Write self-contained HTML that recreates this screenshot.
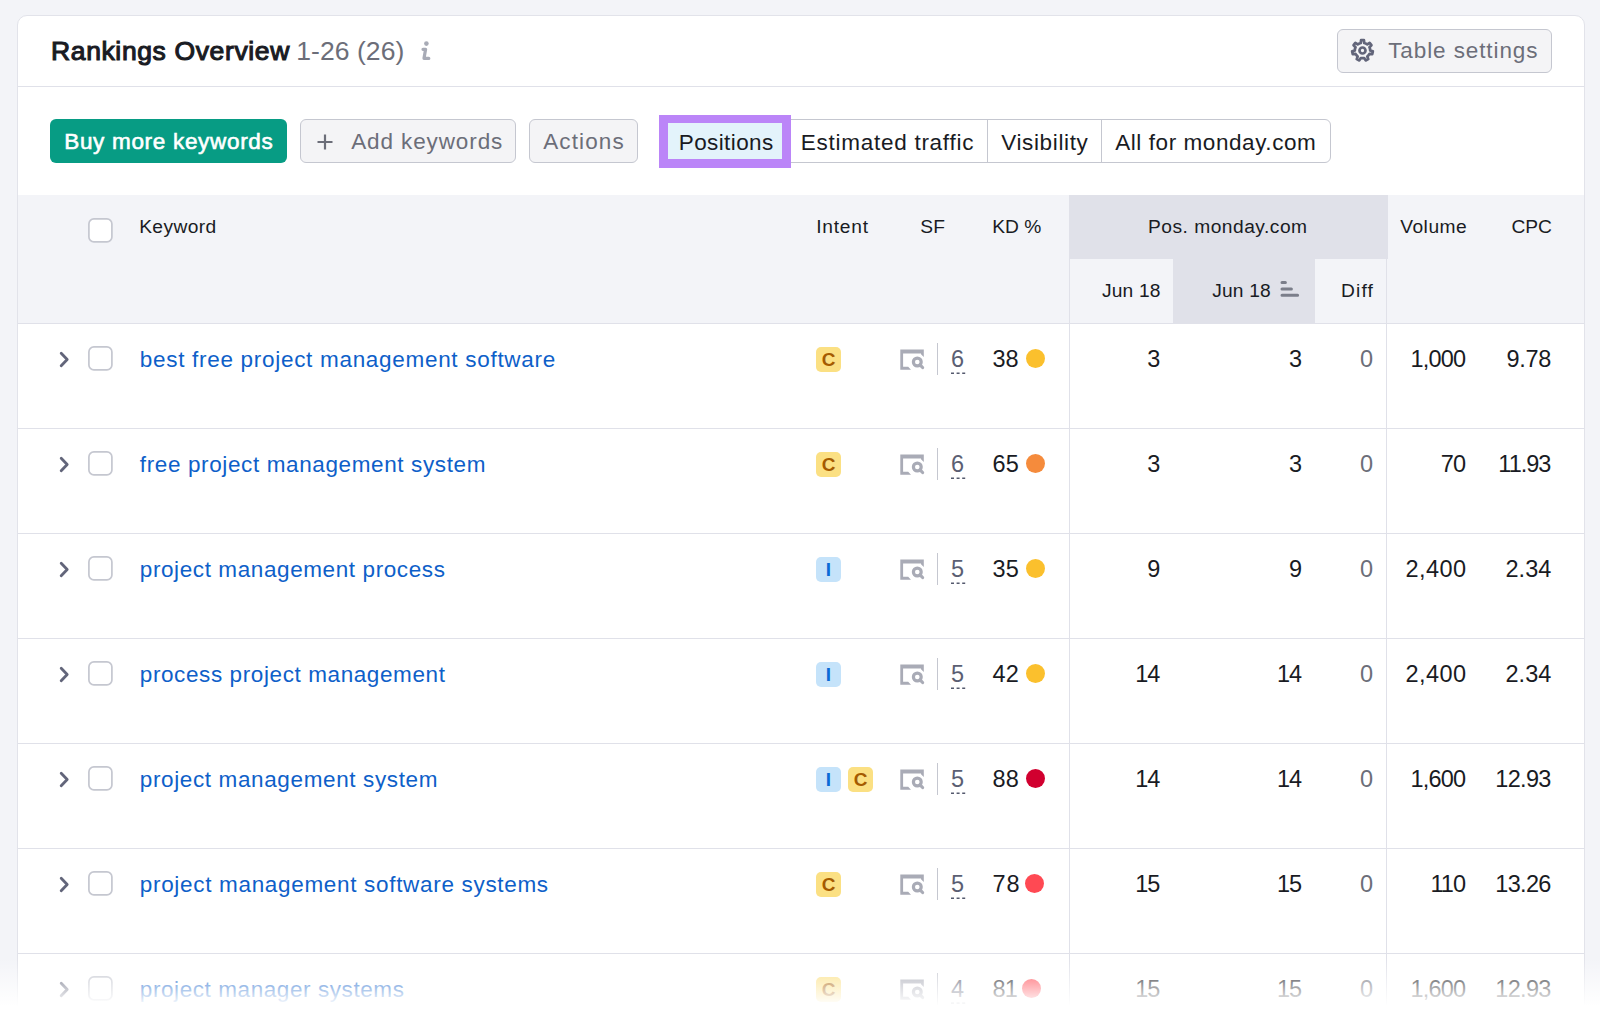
<!DOCTYPE html>
<html><head><meta charset="utf-8"><style>
html,body{margin:0;padding:0;}
body{width:1600px;height:1014px;overflow:hidden;background:#f3f4f8;position:relative;font-family:"Liberation Sans",sans-serif;}
.t{position:absolute;white-space:nowrap;}
.badge{position:absolute;width:25px;height:25px;border-radius:5px;font-weight:700;font-size:19px;line-height:26px;text-align:center;}
</style></head><body>
<div style="position:absolute;left:17px;top:15px;width:1568px;height:1200px;background:#fff;border:1px solid #e2e3ea;border-radius:10px;box-sizing:border-box;"></div>
<div style="position:absolute;left:18px;top:86px;width:1566px;height:1px;background:#e0e1e9;"></div>
<div class="t" style="left:51.00px;top:33.80px;font-size:26.5px;line-height:34px;color:#191b23;letter-spacing:0.625px;-webkit-text-stroke:1.1px #191b23;">Rankings Overview</div>
<div class="t" style="left:296.20px;top:33.80px;font-size:26.5px;line-height:34px;color:#6c6e79;letter-spacing:0.069px;">1-26 (26)</div>
<svg style="position:absolute;left:418px;top:40px" width="14" height="22" viewBox="0 0 14 22"><circle cx="8.4" cy="3.6" r="2.3" fill="#a8abb6"/><path d="M5 9.3 H7.6 L6 18.4 H10.8" fill="none" stroke="#a8abb6" stroke-width="3.2" stroke-linejoin="round" stroke-linecap="round"/></svg>
<div style="position:absolute;left:1337px;top:29px;width:215px;height:44px;background:#f4f4f6;border:1px solid #c5c7d0;border-radius:6px;box-sizing:border-box;"></div>
<svg style="position:absolute;left:1350px;top:38px" width="25" height="25" viewBox="0 0 25 25"><path fill="none" stroke="#62657a" stroke-width="2.7" stroke-linejoin="round" d="M14.23 5.00 L13.95 2.20 L11.05 2.20 L10.77 5.00 L9.16 5.56 L7.71 6.47 L5.35 4.95 L3.55 7.21 L5.55 9.18 L4.99 10.78 L4.80 12.48 L2.14 13.38 L2.78 16.20 L5.57 15.86 L6.48 17.30 L7.68 18.51 L6.73 21.15 L9.34 22.41 L10.81 20.01 L12.50 20.20 L14.19 20.01 L15.66 22.41 L18.27 21.15 L17.32 18.51 L18.52 17.30 L19.430 15.86 L22.22 16.20 L22.86 13.38 L20.20 12.48 L20.01 10.79 L19.45 9.18 L21.45 7.21 L19.65 4.95 L17.29 6.47 L15.84 5.56Z"/><circle cx="12.5" cy="12.5" r="3" fill="none" stroke="#62657a" stroke-width="2.7"/></svg>
<div class="t" style="left:1388.20px;top:36.19px;font-size:22.5px;line-height:29px;color:#6c6e79;letter-spacing:0.900px;">Table settings</div>
<div style="position:absolute;left:50px;top:119px;width:237px;height:44px;background:#079c84;border-radius:6px;"></div>
<div class="t" style="left:64.20px;top:126.69px;font-size:22.5px;line-height:29px;color:#fff;letter-spacing:0.691px;-webkit-text-stroke:0.6px #fff;">Buy more keywords</div>
<div style="position:absolute;left:300px;top:119px;width:216px;height:44px;background:#f4f4f6;border:1px solid #c5c7d0;border-radius:6px;box-sizing:border-box;"></div>
<svg style="position:absolute;left:316px;top:133px" width="18" height="18" viewBox="0 0 18 18"><path d="M9 1.5V16.5M1.5 9H16.5" stroke="#6c6e79" stroke-width="2.2"/></svg>
<div class="t" style="left:351.20px;top:126.69px;font-size:22.5px;line-height:29px;color:#6c6e79;letter-spacing:0.891px;">Add keywords</div>
<div style="position:absolute;left:529px;top:119px;width:109px;height:44px;background:#f4f4f6;border:1px solid #c5c7d0;border-radius:6px;box-sizing:border-box;"></div>
<div class="t" style="left:543.20px;top:126.69px;font-size:22.5px;line-height:29px;color:#6c6e79;letter-spacing:1.133px;">Actions</div>
<div style="position:absolute;left:660px;top:119px;width:671px;height:44px;background:#fff;border:1px solid #c5c7d0;border-radius:6px;box-sizing:border-box;"></div>
<div style="position:absolute;left:987px;top:120px;width:1px;height:42px;background:#c5c7d0;"></div>
<div style="position:absolute;left:1101px;top:120px;width:1px;height:42px;background:#c5c7d0;"></div>
<div style="position:absolute;left:659px;top:115px;width:132px;height:53px;background:#bb85f8;"></div>
<div style="position:absolute;left:668px;top:123px;width:114px;height:36px;background:#e3f3fb;"></div>
<div class="t" style="left:678.80px;top:128.19px;font-size:22.5px;line-height:29px;color:#191b23;letter-spacing:0.387px;">Positions</div>
<div class="t" style="left:800.80px;top:128.19px;font-size:22.5px;line-height:29px;color:#191b23;letter-spacing:0.731px;">Estimated traffic</div>
<div class="t" style="left:1001.20px;top:128.19px;font-size:22.5px;line-height:29px;color:#191b23;letter-spacing:0.639px;">Visibility</div>
<div class="t" style="left:1115.20px;top:128.19px;font-size:22.5px;line-height:29px;color:#191b23;letter-spacing:0.571px;">All for monday.com</div>
<div style="position:absolute;left:18px;top:195px;width:1566px;height:128px;background:#f3f4f8;"></div>
<div style="position:absolute;left:1069px;top:195px;width:319px;height:64px;background:#e0e1e9;"></div>
<div style="position:absolute;left:1173px;top:259px;width:142px;height:64px;background:#e0e1e9;"></div>
<div style="position:absolute;left:18px;top:323px;width:1566px;height:1px;background:#e0e1e9;"></div>
<div style="position:absolute;left:1069px;top:195px;width:1px;height:820px;background:#e0e1e9;"></div>
<div style="position:absolute;left:1386px;top:195px;width:1px;height:820px;background:#e0e1e9;"></div>
<svg style="position:absolute;left:88px;top:218px" width="25" height="25" viewBox="0 0 25 25"><rect x="0.9" y="0.9" width="23" height="23" rx="5" fill="#fff" stroke="#c5c7d0" stroke-width="1.7"/></svg>
<div class="t" style="left:139.20px;top:213.84px;font-size:19.2px;line-height:25px;color:#191b23;letter-spacing:0.383px;">Keyword</div>
<div class="t" style="left:816.20px;top:213.84px;font-size:19.2px;line-height:25px;color:#191b23;letter-spacing:0.770px;">Intent</div>
<div class="t" style="left:920.33px;top:213.84px;font-size:19.2px;line-height:25px;color:#191b23;">SF</div>
<div class="t" style="left:992.20px;top:213.84px;font-size:19.2px;line-height:25px;color:#191b23;">KD %</div>
<div class="t" style="left:1148.00px;top:213.84px;font-size:19.2px;line-height:25px;color:#191b23;letter-spacing:0.496px;">Pos. monday.com</div>
<div class="t" style="left:1400.20px;top:213.84px;font-size:19.2px;line-height:25px;color:#191b23;letter-spacing:0.510px;">Volume</div>
<div class="t" style="left:1511.40px;top:213.84px;font-size:19.2px;line-height:25px;color:#191b23;letter-spacing:-0.075px;">CPC</div>
<div class="t" style="left:1102.10px;top:277.84px;font-size:19.2px;line-height:25px;color:#191b23;letter-spacing:0.130px;">Jun 18</div>
<div class="t" style="left:1212.20px;top:277.84px;font-size:19.2px;line-height:25px;color:#191b23;letter-spacing:0.190px;">Jun 18</div>
<div class="t" style="left:1341.00px;top:277.84px;font-size:19.2px;line-height:25px;color:#191b23;letter-spacing:1.167px;">Diff</div>
<svg style="position:absolute;left:1280px;top:280px" width="21" height="18" viewBox="0 0 21 18"><path d="M2 2.5H5.4M2 8.9H11.4M2 15.3H17.6" stroke="#7b7e8a" stroke-width="3" stroke-linecap="round"/></svg>
<svg style="position:absolute;left:56px;top:349.5px" width="16" height="20" viewBox="0 0 16 20"><path d="M5.2 3.2 L11.2 9.5 L5.2 15.8" fill="none" stroke="#62657a" stroke-width="2.8" stroke-linecap="round" stroke-linejoin="round"/></svg>
<svg style="position:absolute;left:88px;top:346px" width="25" height="25" viewBox="0 0 25 25"><rect x="0.9" y="0.9" width="23" height="23" rx="5" fill="#fff" stroke="#c5c7d0" stroke-width="1.7"/></svg>
<div class="t" style="left:139.80px;top:344.79px;font-size:22.5px;line-height:29px;color:#0e5fc9;letter-spacing:0.700px;">best free project management software</div>
<div class="badge" style="left:816px;top:346.5px;background:#fbe083;color:#a55b00">C</div>
<svg style="position:absolute;left:900px;top:349px" width="25" height="22" viewBox="0 0 25 22"><path d="M0.3 0.4 H23.8 V8 L21 5.2 V4.4 H3.1 V17.7 H8.2 L11 20.8 H0.3 Z" fill="#a9abb6"/><circle cx="17.3" cy="13" r="3.9" fill="none" stroke="#a9abb6" stroke-width="3.2"/><path d="M20 15.8 L22.6 18.5" stroke="#a9abb6" stroke-width="3.2" stroke-linecap="round"/></svg>
<div style="position:absolute;left:937px;top:343px;width:1.4px;height:32px;background:#c5c7d0;"></div>
<div class="t" style="left:951.00px;top:344.45px;font-size:23.5px;line-height:31px;color:#5b5f73;">6</div>
<svg style="position:absolute;left:951px;top:372px" width="15" height="3"><path d="M0 1.25H3M5.6 1.25H8.6M11.2 1.25H14.2" stroke="#555a6e" stroke-width="1.6"/></svg>
<div class="t" style="left:992.60px;top:344.45px;font-size:23.5px;line-height:31px;color:#191b23;letter-spacing:-0.050px;">38</div>
<div style="position:absolute;left:1026px;top:349px;width:19px;height:19px;border-radius:50%;background:#fbc02d"></div>
<div class="t" style="left:1147.35px;top:344.45px;font-size:23.5px;line-height:31px;color:#191b23;">3</div>
<div class="t" style="left:1289.05px;top:344.45px;font-size:23.5px;line-height:31px;color:#191b23;">3</div>
<div class="t" style="left:1359.95px;top:344.45px;font-size:23.5px;line-height:31px;color:#6c6e79;">0</div>
<div class="t" style="left:1410.40px;top:344.45px;font-size:23.5px;line-height:31px;color:#191b23;letter-spacing:-0.800px;">1,000</div>
<div class="t" style="left:1506.60px;top:344.45px;font-size:23.5px;line-height:31px;color:#191b23;letter-spacing:-0.317px;">9.78</div>
<div style="position:absolute;left:18px;top:428px;width:1566px;height:1px;background:#e0e1e9;"></div>
<svg style="position:absolute;left:56px;top:454.5px" width="16" height="20" viewBox="0 0 16 20"><path d="M5.2 3.2 L11.2 9.5 L5.2 15.8" fill="none" stroke="#62657a" stroke-width="2.8" stroke-linecap="round" stroke-linejoin="round"/></svg>
<svg style="position:absolute;left:88px;top:451px" width="25" height="25" viewBox="0 0 25 25"><rect x="0.9" y="0.9" width="23" height="23" rx="5" fill="#fff" stroke="#c5c7d0" stroke-width="1.7"/></svg>
<div class="t" style="left:139.80px;top:449.79px;font-size:22.5px;line-height:29px;color:#0e5fc9;letter-spacing:0.619px;">free project management system</div>
<div class="badge" style="left:816px;top:451.5px;background:#fbe083;color:#a55b00">C</div>
<svg style="position:absolute;left:900px;top:454px" width="25" height="22" viewBox="0 0 25 22"><path d="M0.3 0.4 H23.8 V8 L21 5.2 V4.4 H3.1 V17.7 H8.2 L11 20.8 H0.3 Z" fill="#a9abb6"/><circle cx="17.3" cy="13" r="3.9" fill="none" stroke="#a9abb6" stroke-width="3.2"/><path d="M20 15.8 L22.6 18.5" stroke="#a9abb6" stroke-width="3.2" stroke-linecap="round"/></svg>
<div style="position:absolute;left:937px;top:448px;width:1.4px;height:32px;background:#c5c7d0;"></div>
<div class="t" style="left:951.00px;top:449.45px;font-size:23.5px;line-height:31px;color:#5b5f73;">6</div>
<svg style="position:absolute;left:951px;top:477px" width="15" height="3"><path d="M0 1.25H3M5.6 1.25H8.6M11.2 1.25H14.2" stroke="#555a6e" stroke-width="1.6"/></svg>
<div class="t" style="left:992.60px;top:449.45px;font-size:23.5px;line-height:31px;color:#191b23;">65</div>
<div style="position:absolute;left:1026px;top:454px;width:19px;height:19px;border-radius:50%;background:#f58b3c"></div>
<div class="t" style="left:1147.35px;top:449.45px;font-size:23.5px;line-height:31px;color:#191b23;">3</div>
<div class="t" style="left:1289.05px;top:449.45px;font-size:23.5px;line-height:31px;color:#191b23;">3</div>
<div class="t" style="left:1359.95px;top:449.45px;font-size:23.5px;line-height:31px;color:#6c6e79;">0</div>
<div class="t" style="left:1440.80px;top:449.45px;font-size:23.5px;line-height:31px;color:#191b23;letter-spacing:-0.950px;">70</div>
<div class="t" style="left:1498.35px;top:449.45px;font-size:23.5px;line-height:31px;color:#191b23;letter-spacing:-1.000px;">11.93</div>
<div style="position:absolute;left:18px;top:533px;width:1566px;height:1px;background:#e0e1e9;"></div>
<svg style="position:absolute;left:56px;top:559.5px" width="16" height="20" viewBox="0 0 16 20"><path d="M5.2 3.2 L11.2 9.5 L5.2 15.8" fill="none" stroke="#62657a" stroke-width="2.8" stroke-linecap="round" stroke-linejoin="round"/></svg>
<svg style="position:absolute;left:88px;top:556px" width="25" height="25" viewBox="0 0 25 25"><rect x="0.9" y="0.9" width="23" height="23" rx="5" fill="#fff" stroke="#c5c7d0" stroke-width="1.7"/></svg>
<div class="t" style="left:139.80px;top:554.79px;font-size:22.5px;line-height:29px;color:#0e5fc9;letter-spacing:0.598px;">project management process</div>
<div class="badge" style="left:816px;top:556.5px;background:#c5e3fa;color:#0a6ad6">I</div>
<svg style="position:absolute;left:900px;top:559px" width="25" height="22" viewBox="0 0 25 22"><path d="M0.3 0.4 H23.8 V8 L21 5.2 V4.4 H3.1 V17.7 H8.2 L11 20.8 H0.3 Z" fill="#a9abb6"/><circle cx="17.3" cy="13" r="3.9" fill="none" stroke="#a9abb6" stroke-width="3.2"/><path d="M20 15.8 L22.6 18.5" stroke="#a9abb6" stroke-width="3.2" stroke-linecap="round"/></svg>
<div style="position:absolute;left:937px;top:553px;width:1.4px;height:32px;background:#c5c7d0;"></div>
<div class="t" style="left:951.00px;top:554.45px;font-size:23.5px;line-height:31px;color:#5b5f73;">5</div>
<svg style="position:absolute;left:951px;top:582px" width="15" height="3"><path d="M0 1.25H3M5.6 1.25H8.6M11.2 1.25H14.2" stroke="#555a6e" stroke-width="1.6"/></svg>
<div class="t" style="left:992.60px;top:554.45px;font-size:23.5px;line-height:31px;color:#191b23;">35</div>
<div style="position:absolute;left:1026px;top:559px;width:19px;height:19px;border-radius:50%;background:#fbc02d"></div>
<div class="t" style="left:1147.35px;top:554.45px;font-size:23.5px;line-height:31px;color:#191b23;">9</div>
<div class="t" style="left:1289.05px;top:554.45px;font-size:23.5px;line-height:31px;color:#191b23;">9</div>
<div class="t" style="left:1359.95px;top:554.45px;font-size:23.5px;line-height:31px;color:#6c6e79;">0</div>
<div class="t" style="left:1405.60px;top:554.45px;font-size:23.5px;line-height:31px;color:#191b23;letter-spacing:0.400px;">2,400</div>
<div class="t" style="left:1505.40px;top:554.45px;font-size:23.5px;line-height:31px;color:#191b23;letter-spacing:0.083px;">2.34</div>
<div style="position:absolute;left:18px;top:638px;width:1566px;height:1px;background:#e0e1e9;"></div>
<svg style="position:absolute;left:56px;top:664.5px" width="16" height="20" viewBox="0 0 16 20"><path d="M5.2 3.2 L11.2 9.5 L5.2 15.8" fill="none" stroke="#62657a" stroke-width="2.8" stroke-linecap="round" stroke-linejoin="round"/></svg>
<svg style="position:absolute;left:88px;top:661px" width="25" height="25" viewBox="0 0 25 25"><rect x="0.9" y="0.9" width="23" height="23" rx="5" fill="#fff" stroke="#c5c7d0" stroke-width="1.7"/></svg>
<div class="t" style="left:139.80px;top:659.79px;font-size:22.5px;line-height:29px;color:#0e5fc9;letter-spacing:0.598px;">process project management</div>
<div class="badge" style="left:816px;top:661.5px;background:#c5e3fa;color:#0a6ad6">I</div>
<svg style="position:absolute;left:900px;top:664px" width="25" height="22" viewBox="0 0 25 22"><path d="M0.3 0.4 H23.8 V8 L21 5.2 V4.4 H3.1 V17.7 H8.2 L11 20.8 H0.3 Z" fill="#a9abb6"/><circle cx="17.3" cy="13" r="3.9" fill="none" stroke="#a9abb6" stroke-width="3.2"/><path d="M20 15.8 L22.6 18.5" stroke="#a9abb6" stroke-width="3.2" stroke-linecap="round"/></svg>
<div style="position:absolute;left:937px;top:658px;width:1.4px;height:32px;background:#c5c7d0;"></div>
<div class="t" style="left:951.00px;top:659.45px;font-size:23.5px;line-height:31px;color:#5b5f73;">5</div>
<svg style="position:absolute;left:951px;top:687px" width="15" height="3"><path d="M0 1.25H3M5.6 1.25H8.6M11.2 1.25H14.2" stroke="#555a6e" stroke-width="1.6"/></svg>
<div class="t" style="left:992.60px;top:659.45px;font-size:23.5px;line-height:31px;color:#191b23;">42</div>
<div style="position:absolute;left:1026px;top:664px;width:19px;height:19px;border-radius:50%;background:#fbc02d"></div>
<div class="t" style="left:1135.25px;top:659.45px;font-size:23.5px;line-height:31px;color:#191b23;letter-spacing:-1.000px;">14</div>
<div class="t" style="left:1276.95px;top:659.45px;font-size:23.5px;line-height:31px;color:#191b23;letter-spacing:-1.000px;">14</div>
<div class="t" style="left:1359.95px;top:659.45px;font-size:23.5px;line-height:31px;color:#6c6e79;">0</div>
<div class="t" style="left:1405.60px;top:659.45px;font-size:23.5px;line-height:31px;color:#191b23;letter-spacing:0.400px;">2,400</div>
<div class="t" style="left:1505.40px;top:659.45px;font-size:23.5px;line-height:31px;color:#191b23;letter-spacing:0.083px;">2.34</div>
<div style="position:absolute;left:18px;top:743px;width:1566px;height:1px;background:#e0e1e9;"></div>
<svg style="position:absolute;left:56px;top:769.5px" width="16" height="20" viewBox="0 0 16 20"><path d="M5.2 3.2 L11.2 9.5 L5.2 15.8" fill="none" stroke="#62657a" stroke-width="2.8" stroke-linecap="round" stroke-linejoin="round"/></svg>
<svg style="position:absolute;left:88px;top:766px" width="25" height="25" viewBox="0 0 25 25"><rect x="0.9" y="0.9" width="23" height="23" rx="5" fill="#fff" stroke="#c5c7d0" stroke-width="1.7"/></svg>
<div class="t" style="left:139.80px;top:764.79px;font-size:22.5px;line-height:29px;color:#0e5fc9;letter-spacing:0.625px;">project management system</div>
<div class="badge" style="left:816px;top:766.5px;background:#c5e3fa;color:#0a6ad6">I</div>
<div class="badge" style="left:848px;top:766.5px;background:#fbe083;color:#a55b00">C</div>
<svg style="position:absolute;left:900px;top:769px" width="25" height="22" viewBox="0 0 25 22"><path d="M0.3 0.4 H23.8 V8 L21 5.2 V4.4 H3.1 V17.7 H8.2 L11 20.8 H0.3 Z" fill="#a9abb6"/><circle cx="17.3" cy="13" r="3.9" fill="none" stroke="#a9abb6" stroke-width="3.2"/><path d="M20 15.8 L22.6 18.5" stroke="#a9abb6" stroke-width="3.2" stroke-linecap="round"/></svg>
<div style="position:absolute;left:937px;top:763px;width:1.4px;height:32px;background:#c5c7d0;"></div>
<div class="t" style="left:951.00px;top:764.45px;font-size:23.5px;line-height:31px;color:#5b5f73;">5</div>
<svg style="position:absolute;left:951px;top:792px" width="15" height="3"><path d="M0 1.25H3M5.6 1.25H8.6M11.2 1.25H14.2" stroke="#555a6e" stroke-width="1.6"/></svg>
<div class="t" style="left:992.60px;top:764.45px;font-size:23.5px;line-height:31px;color:#191b23;">88</div>
<div style="position:absolute;left:1026px;top:769px;width:19px;height:19px;border-radius:50%;background:#d1002f"></div>
<div class="t" style="left:1135.25px;top:764.45px;font-size:23.5px;line-height:31px;color:#191b23;letter-spacing:-1.000px;">14</div>
<div class="t" style="left:1276.95px;top:764.45px;font-size:23.5px;line-height:31px;color:#191b23;letter-spacing:-1.000px;">14</div>
<div class="t" style="left:1359.95px;top:764.45px;font-size:23.5px;line-height:31px;color:#6c6e79;">0</div>
<div class="t" style="left:1410.60px;top:764.45px;font-size:23.5px;line-height:31px;color:#191b23;letter-spacing:-0.850px;">1,600</div>
<div class="t" style="left:1495.30px;top:764.45px;font-size:23.5px;line-height:31px;color:#191b23;letter-spacing:-0.675px;">12.93</div>
<div style="position:absolute;left:18px;top:848px;width:1566px;height:1px;background:#e0e1e9;"></div>
<svg style="position:absolute;left:56px;top:874.5px" width="16" height="20" viewBox="0 0 16 20"><path d="M5.2 3.2 L11.2 9.5 L5.2 15.8" fill="none" stroke="#62657a" stroke-width="2.8" stroke-linecap="round" stroke-linejoin="round"/></svg>
<svg style="position:absolute;left:88px;top:871px" width="25" height="25" viewBox="0 0 25 25"><rect x="0.9" y="0.9" width="23" height="23" rx="5" fill="#fff" stroke="#c5c7d0" stroke-width="1.7"/></svg>
<div class="t" style="left:139.80px;top:869.79px;font-size:22.5px;line-height:29px;color:#0e5fc9;letter-spacing:0.681px;">project management software systems</div>
<div class="badge" style="left:816px;top:871.5px;background:#fbe083;color:#a55b00">C</div>
<svg style="position:absolute;left:900px;top:874px" width="25" height="22" viewBox="0 0 25 22"><path d="M0.3 0.4 H23.8 V8 L21 5.2 V4.4 H3.1 V17.7 H8.2 L11 20.8 H0.3 Z" fill="#a9abb6"/><circle cx="17.3" cy="13" r="3.9" fill="none" stroke="#a9abb6" stroke-width="3.2"/><path d="M20 15.8 L22.6 18.5" stroke="#a9abb6" stroke-width="3.2" stroke-linecap="round"/></svg>
<div style="position:absolute;left:937px;top:868px;width:1.4px;height:32px;background:#c5c7d0;"></div>
<div class="t" style="left:951.00px;top:869.45px;font-size:23.5px;line-height:31px;color:#5b5f73;">5</div>
<svg style="position:absolute;left:951px;top:897px" width="15" height="3"><path d="M0 1.25H3M5.6 1.25H8.6M11.2 1.25H14.2" stroke="#555a6e" stroke-width="1.6"/></svg>
<div class="t" style="left:992.60px;top:869.45px;font-size:23.5px;line-height:31px;color:#191b23;letter-spacing:0.750px;">78</div>
<div style="position:absolute;left:1024.6px;top:874px;width:19px;height:19px;border-radius:50%;background:#ff4953"></div>
<div class="t" style="left:1135.25px;top:869.45px;font-size:23.5px;line-height:31px;color:#191b23;letter-spacing:-1.000px;">15</div>
<div class="t" style="left:1276.95px;top:869.45px;font-size:23.5px;line-height:31px;color:#191b23;letter-spacing:-1.000px;">15</div>
<div class="t" style="left:1359.95px;top:869.45px;font-size:23.5px;line-height:31px;color:#6c6e79;">0</div>
<div class="t" style="left:1430.55px;top:869.45px;font-size:23.5px;line-height:31px;color:#191b23;letter-spacing:-1.000px;">110</div>
<div class="t" style="left:1495.30px;top:869.45px;font-size:23.5px;line-height:31px;color:#191b23;letter-spacing:-0.675px;">13.26</div>
<div style="position:absolute;left:18px;top:953px;width:1566px;height:1px;background:#e0e1e9;"></div>
<svg style="position:absolute;left:56px;top:979.5px" width="16" height="20" viewBox="0 0 16 20"><path d="M5.2 3.2 L11.2 9.5 L5.2 15.8" fill="none" stroke="#62657a" stroke-width="2.8" stroke-linecap="round" stroke-linejoin="round"/></svg>
<svg style="position:absolute;left:88px;top:976px" width="25" height="25" viewBox="0 0 25 25"><rect x="0.9" y="0.9" width="23" height="23" rx="5" fill="#fff" stroke="#c5c7d0" stroke-width="1.7"/></svg>
<div class="t" style="left:139.80px;top:974.79px;font-size:22.5px;line-height:29px;color:#0e5fc9;letter-spacing:0.580px;">project manager systems</div>
<div class="badge" style="left:816px;top:976.5px;background:#fbe083;color:#a55b00">C</div>
<svg style="position:absolute;left:900px;top:979px" width="25" height="22" viewBox="0 0 25 22"><path d="M0.3 0.4 H23.8 V8 L21 5.2 V4.4 H3.1 V17.7 H8.2 L11 20.8 H0.3 Z" fill="#a9abb6"/><circle cx="17.3" cy="13" r="3.9" fill="none" stroke="#a9abb6" stroke-width="3.2"/><path d="M20 15.8 L22.6 18.5" stroke="#a9abb6" stroke-width="3.2" stroke-linecap="round"/></svg>
<div style="position:absolute;left:937px;top:973px;width:1.4px;height:32px;background:#c5c7d0;"></div>
<div class="t" style="left:951.00px;top:974.45px;font-size:23.5px;line-height:31px;color:#5b5f73;">4</div>
<svg style="position:absolute;left:951px;top:1002px" width="15" height="3"><path d="M0 1.25H3M5.6 1.25H8.6M11.2 1.25H14.2" stroke="#555a6e" stroke-width="1.6"/></svg>
<div class="t" style="left:992.60px;top:974.45px;font-size:23.5px;line-height:31px;color:#191b23;letter-spacing:-1.000px;">81</div>
<div style="position:absolute;left:1022.4px;top:979px;width:19px;height:19px;border-radius:50%;background:#ff4953"></div>
<div class="t" style="left:1135.25px;top:974.45px;font-size:23.5px;line-height:31px;color:#191b23;letter-spacing:-1.000px;">15</div>
<div class="t" style="left:1276.95px;top:974.45px;font-size:23.5px;line-height:31px;color:#191b23;letter-spacing:-1.000px;">15</div>
<div class="t" style="left:1359.95px;top:974.45px;font-size:23.5px;line-height:31px;color:#6c6e79;">0</div>
<div class="t" style="left:1410.60px;top:974.45px;font-size:23.5px;line-height:31px;color:#191b23;letter-spacing:-0.850px;">1,600</div>
<div class="t" style="left:1495.30px;top:974.45px;font-size:23.5px;line-height:31px;color:#191b23;letter-spacing:-0.675px;">12.93</div>
<div style="position:absolute;left:0px;top:958px;width:1600px;height:56px;background:linear-gradient(to bottom,rgba(255,255,255,0) 0%,rgba(255,255,255,1) 86%);"></div>
</body></html>
